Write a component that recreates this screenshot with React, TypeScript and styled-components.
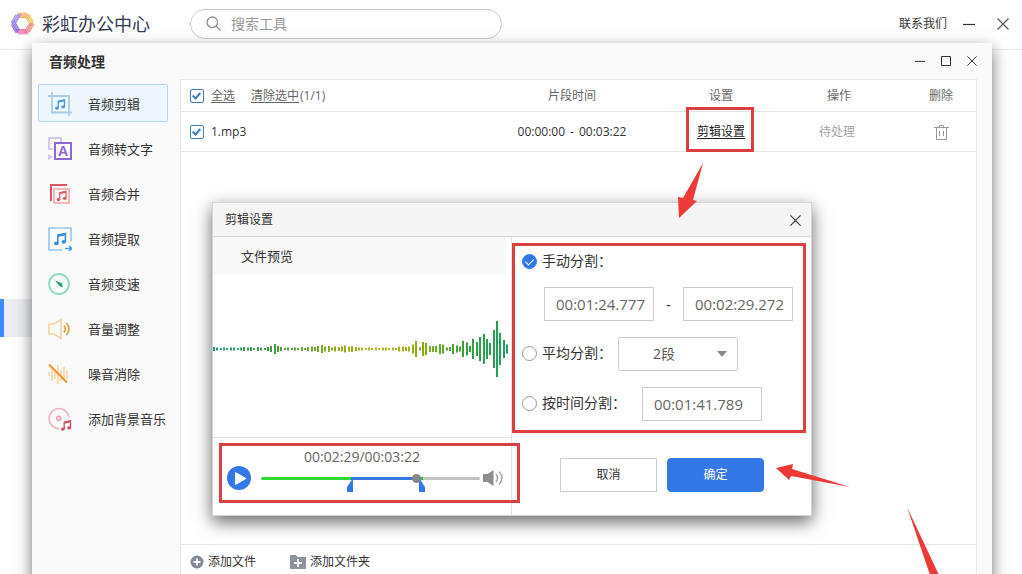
import React from 'react';
import styled, { createGlobalStyle, css } from 'styled-components';

const RED = '#d9403f';
const BLUE = '#3478e8';

const GlobalStyle = createGlobalStyle`
  *, *::before, *::after { box-sizing: border-box; }
  body {
    margin: 0;
    background: #fff;
    color: #333;
    font-family: "Open Sans", "Noto Sans CJK SC", sans-serif;
    font-size: 12px;
    line-height: 18px;
  }
  button, input, select { font: inherit; color: inherit; margin: 0; }
  button { background: none; border: 0; padding: 0; cursor: pointer; }
  svg { display: block; flex: none; }
`;

/* ---------- host application ---------- */

const Page = styled.div`
  position: relative;
  min-height: 100vh;
  overflow: hidden;
`;

const Header = styled.header`
  display: flex;
  align-items: center;
  height: 50px;
  padding: 0 13px 2px 11px;
  border-bottom: 1px solid #e8e8e8;
`;

const Brand = styled.h1`
  display: flex;
  align-items: center;
  gap: 8px;
  margin: 0 40px 0 0;
  color: #33394f;
  font-size: 18px;
  font-weight: 400;
  line-height: 24px;
`;

const Search = styled.label`
  display: flex;
  align-items: center;
  gap: 10px;
  flex: 0 1 312px;
  height: 30px;
  padding: 0 15px;
  border: 1px solid #c9cacd;
  border-radius: 15px;
  input {
    flex: 1;
    min-width: 0;
    padding: 0;
    border: 0;
    outline: 0;
    background: none;
    font-size: 14px;
  }
  input::placeholder { color: #9a9a9a; opacity: 1; }
`;

const HeaderActions = styled.div`
  display: flex;
  align-items: center;
  margin-left: auto;
`;

const ContactLink = styled.a`
  margin-right: 16px;
  color: #333;
  text-decoration: none;
`;

const WindowButtons = styled.div<{ $gap: number }>`
  display: flex;
  align-items: center;
  gap: ${(p) => p.$gap}px;
`;

const Rail = styled.nav`
  width: 60px;
  padding-top: 249px;
`;

const RailItem = styled.div`
  height: 38px;
  border-left: 4px solid #3d8bfa;
  background: #ecedf0;
`;

/* ---------- audio window ---------- */

const Window = styled.section`
  position: absolute;
  top: 43px;
  right: 30px;
  bottom: -21px;
  left: 32px;
  display: flex;
  flex-direction: column;
  background: #fafafa;
  box-shadow: 0 6px 15px rgba(0, 0, 0, 0.55);
`;

const TitleBar = styled.div`
  display: flex;
  align-items: center;
  justify-content: space-between;
  height: 36px;
  padding: 0 15px 0 17px;
  h2 { margin: 0; padding-top: 2px; font-size: 14px; line-height: 20px; font-weight: 700; }
`;

const WindowBody = styled.div`
  flex: 1;
  display: flex;
  padding: 0 15px 15px 0;
`;

const Sidebar = styled.nav`
  display: flex;
  flex-direction: column;
  gap: 7px;
  width: 148px;
  padding: 5px 12px 0 6px;
`;

const SideItem = styled.button<{ $active?: boolean }>`
  display: flex;
  align-items: center;
  gap: 16px;
  height: 38px;
  padding: 1px 0 0 9px;
  border: 1px solid transparent;
  border-radius: 2px;
  font-size: 13px;
  white-space: nowrap;
  ${(p) => p.$active && css`
    border-color: #b5d6f3;
    background: #eef6fe;
  `}
`;

const Panel = styled.main`
  flex: 1;
  display: flex;
  flex-direction: column;
  border: 1px solid #e5e8ea;
  background: #fff;
`;

const FileTable = styled.table`
  width: 100%;
  table-layout: fixed;
  border-collapse: separate;
  border-spacing: 0;
  th, td {
    position: relative;
    height: 40px;
    padding: 0;
    border-bottom: 1px solid #e6e6e6;
    text-align: center;
    font-weight: 400;
  }
  th { height: 32px; color: #666; }
  th:first-child, td:first-child { padding-left: 9px; text-align: left; }
`;

const CheckRow = styled.div`
  display: flex;
  align-items: center;
  gap: 7px;
  label { cursor: pointer; }
`;

const TextButton = styled.button<{ $dark?: boolean }>`
  color: ${(p) => (p.$dark ? '#222' : '#666')};
  text-decoration: underline;
  text-underline-offset: 2px;
`;

const ClearGroup = styled.span`
  display: flex;
  gap: 1px;
  margin-left: 9px;
`;

const TimeRange = styled.span`
  display: flex;
  justify-content: center;
  gap: 5px;
`;

const Checkbox = styled.input`
  appearance: none;
  position: relative;
  width: 14px;
  height: 14px;
  border: 1px solid #3f7fc0;
  border-radius: 2px;
  background: #fff;
  &:checked::after {
    content: '';
    position: absolute;
    top: 1px;
    left: 3px;
    width: 5px;
    height: 8px;
    border: solid #3f7fc0;
    border-width: 0 2px 2px 0;
    transform: rotate(42deg);
  }
`;

const Muted = styled.span`
  padding-right: 4px;
  color: #a3a3a3;
`;

const IconButton = styled.button`
  display: inline-flex;
  vertical-align: middle;
`;

const PanelFooter = styled.footer`
  display: flex;
  align-items: center;
  gap: 34px;
  height: 35px;
  margin-top: auto;
  padding-left: 9px;
  border-top: 1px solid #e6e6e6;
`;

const FooterButton = styled.button`
  display: flex;
  align-items: center;
  gap: 4px;
`;

/* ---------- dialog ---------- */

const Dialog = styled.section`
  position: absolute;
  top: 159px;
  right: 0;
  left: 0;
  width: 600px;
  margin: 0 auto;
  border: 1px solid #d4d4d4;
  background: #fff;
  box-shadow: 0 6px 16px rgba(0, 0, 0, 0.6);
`;

const DialogTitle = styled.div`
  display: flex;
  align-items: center;
  justify-content: space-between;
  height: 34px;
  padding: 1px 10px 0 12px;
  border-bottom: 1px solid #d6d6d6;
  background: #f5f5f5;
  h3 { margin: 0; font-size: 12px; font-weight: 400; }
`;

const DialogBody = styled.div`
  display: grid;
  grid-template-columns: 299px 1fr;
`;

const Preview = styled.div`
  border-right: 1px solid #e3e3e3;
`;

const PreviewTitle = styled.h4`
  margin: 0 5px 0 0;
  padding-left: 28px;
  background: #f8f8f8;
  font-size: 13px;
  font-weight: 400;
  line-height: 38px;
`;

const WaveArea = styled.div`
  height: 163px;
  border-bottom: 1px solid #e3e3e3;
`;

const Player = styled.div`
  position: relative;
  height: 77px;
  padding-top: 10px;
  color: #666;
  font-size: 14px;
  text-align: center;
`;

const PlayerRow = styled.div`
  display: flex;
  align-items: center;
  height: 24px;
  padding: 0 6px 0 14px;
`;

const Track = styled.div`
  position: relative;
  flex: 1;
  margin: 0 3px 0 10px;
  height: 24px;
`;

const Seek = styled.input`
  appearance: none;
  display: block;
  width: 100%;
  height: 24px;
  background: none;
  &::-webkit-slider-runnable-track {
    height: 3px;
    border-radius: 2px;
    background: linear-gradient(
      to right,
      #30dc32 0 41%,
      ${BLUE} 41% 72%,
      #38b848 72% 74%,
      #c2c2c2 74%
    );
  }
  &::-webkit-slider-thumb {
    appearance: none;
    width: 9px;
    height: 9px;
    margin-top: -3px;
    border-radius: 50%;
    background: #888;
  }
`;

const TrimHandle = styled.svg<{ $at: number; $end?: boolean }>`
  position: absolute;
  top: 12px;
  left: ${(p) => p.$at}%;
  transform: ${(p) => (p.$end ? 'scaleX(-1)' : 'translateX(-100%)')};
`;

const Options = styled.form`
  display: flex;
  flex-direction: column;
`;

const Fields = styled.fieldset`
  position: relative;
  display: flex;
  flex-direction: column;
  gap: 16px;
  min-width: 0;
  margin: 0;
  padding: 14px 0 0 10px;
  border: 0;
`;

const OptionRow = styled.div<{ $gap?: number }>`
  display: flex;
  align-items: center;
  gap: ${(p) => p.$gap ?? 0}px;
`;

const RadioLabel = styled.label`
  display: flex;
  align-items: center;
  gap: 5px;
  font-size: 14px;
  line-height: 20px;
  &:not(:only-child) { padding-bottom: 2px; }
`;

const Radio = styled.input`
  appearance: none;
  position: relative;
  width: 15px;
  height: 15px;
  border: 1px solid #999;
  border-radius: 50%;
  background: #fff;
  &:checked { border-color: ${BLUE}; background: ${BLUE}; }
  &:checked::after {
    content: '';
    position: absolute;
    top: 2px;
    left: 4px;
    width: 5px;
    height: 8px;
    border: solid #fff;
    border-width: 0 1px 1px 0;
    transform: rotate(45deg);
  }
`;

const RangeRow = styled.div`
  display: flex;
  align-items: center;
  padding-left: 22px;
  > span { width: 29px; text-align: center; font-size: 15px; }
`;

const TimeInput = styled.input<{ $w: number }>`
  width: ${(p) => p.$w}px;
  height: 34px;
  padding: 0 0 0 11px;
  border: 1px solid #ccc;
  background: #fff;
  color: #666;
  font-size: 15px;
`;

const SelectBox = styled.div`
  position: relative;
  &::after {
    content: '';
    position: absolute;
    top: 14px;
    right: 11px;
    border: 5px solid transparent;
    border-top: 6px solid #888;
    border-bottom: 0;
    pointer-events: none;
  }
  select {
    appearance: none;
    display: block;
    width: 120px;
    height: 34px;
    padding: 0 30px 0 34px;
    border: 1px solid #ccc;
    border-radius: 2px;
    background: #fff;
    color: #555;
    font-size: 14px;
  }
`;

const Actions = styled.div`
  display: flex;
  gap: 10px;
  margin-top: 37px;
  padding-left: 48px;
`;

const ActionButton = styled.button<{ $primary?: boolean }>`
  width: 97px;
  height: 34px;
  border: 1px solid #c9ced6;
  background: #fff;
  ${(p) => p.$primary && css`
    border-color: ${BLUE};
    border-radius: 4px;
    background: ${BLUE};
    color: #fff;
  `}
`;

/* ---------- tutorial marks ---------- */

const Mark = styled.div<{ $inset: string }>`
  position: absolute;
  inset: ${(p) => p.$inset};
  border: 3px solid ${RED};
  pointer-events: none;
`;

const Arrow = styled.svg<{ $inset: string }>`
  position: absolute;
  inset: ${(p) => p.$inset};
  fill: #ee3a37;
  pointer-events: none;
`;

/* ---------- icons ---------- */

const HEX_COLORS = ['#f7a86c', '#fbc45c', '#f58a80', '#ee72b0', '#8a6be0', '#a08cf0'];

const LogoIcon = () => (
  <svg width="23" height="23" viewBox="-11.5 -11.5 23 23" fill="none" strokeWidth="1.1">
    {HEX_COLORS.map((color, i) => (
      <g key={color} stroke={color} transform={`rotate(${i * 60})`}>
        <path d="M-5.4 -10.2H4.6M-5.4 -8.8H5.6M-5 -7.4H6.4M-3.8 -6H7.2" />
      </g>
    ))}
  </svg>
);

const SearchIcon = () => (
  <svg width="15" height="15" viewBox="0 0 15 15" fill="none" stroke="#8b8f9c" strokeWidth="1.3">
    <circle cx="6.3" cy="6.3" r="5.3" />
    <path d="M10.2 10.2L14.4 14.4" />
  </svg>
);

const MinimizeIcon = ({ size = 12 }) => (
  <svg width={size} height={size} viewBox="0 0 12 12" stroke="#333" strokeWidth="1.2">
    <path d="M0 6.5H12" />
  </svg>
);

const MaximizeIcon = () => (
  <svg width="10" height="10" viewBox="0 0 10 10" fill="none" stroke="#333">
    <path d="M.5 .5H9.5V9.5H.5Z" />
  </svg>
);

const CloseIcon = ({ size = 12, color = '#333' }) => (
  <svg width={size} height={size} viewBox="0 0 12 12" stroke={color} strokeWidth="1.2">
    <path d="M.5 .5L11.5 11.5M11.5 .5L.5 11.5" />
  </svg>
);

const TrashIcon = () => (
  <svg width="15" height="16" viewBox="0 0 15 16" fill="none" stroke="#999">
    <path d="M0 3.5H15M5.500 3V1.500H9.500V3M2.500 3.500V15.500H12.500V3.500M5.500 7V12M9.500 7V12" />
  </svg>
);

const Note = ({ color, x = 0, y = 0 }: { color: string; x?: number; y?: number }) => (
  <g transform={`translate(${x} ${y})`}>
    <path d="M3.2 9V2.2L9.5 .8V7.5" fill="none" stroke={color} strokeWidth="1.3" />
    <path d="M3.2 2.8L9.5 1.4" stroke={color} strokeWidth="1.8" />
    <ellipse cx="1.9" cy="9.1" rx="1.9" ry="1.6" fill={color} />
    <ellipse cx="8.2" cy="7.8" rx="1.9" ry="1.6" fill={color} />
  </g>
);

const SideIcon = ({ children }: { children: React.ReactNode }) => (
  <svg width="24" height="24" viewBox="0 0 24 24" fill="none">{children}</svg>
);

const TrimIcon = () => (
  <SideIcon>
    <path d="M0 4H21V20M4 0V20.5H24M21 20V24" stroke="#a9cbe6" strokeWidth="1.8" />
    <Note color="#4c9ad6" x={7} y={7} />
  </SideIcon>
);

const ToTextIcon = () => (
  <SideIcon>
    <path d="M5 12H1V1H13V5" stroke="#cbb8ee" strokeWidth="1.5" />
    <path d="M0 17L5 20L0 23Z" fill="#d3c3f1" />
    <rect x="7" y="6" width="16" height="16" stroke="#9068d4" strokeWidth="2" />
    <text x="15" y="19" textAnchor="middle" fill="#9068d4" fontSize="14" fontWeight="700" fontFamily="Liberation Sans">A</text>
  </SideIcon>
);

const MergeIcon = () => (
  <SideIcon>
    <path d="M3 19V3H19" stroke="#dd5560" strokeWidth="2" />
    <rect x="6" y="7" width="15" height="14" stroke="#f2a7a6" strokeWidth="1.6" />
    <Note color="#df5c62" x={8.5} y={8.5} />
  </SideIcon>
);

const ExtractIcon = () => (
  <SideIcon>
    <path d="M23 14V1H1V23H14" stroke="#9cc5f2" strokeWidth="1.6" />
    <g transform="translate(6 5.500) scale(1.2)"><Note color="#3b8ce0" /></g>
    <path d="M17 21.5H23.5M21 19L23.8 21.5L21 24" stroke="#4d9ae4" strokeWidth="1.6" />
  </SideIcon>
);

const SpeedIcon = () => (
  <SideIcon>
    <circle cx="11" cy="12" r="10" stroke="#8edcc2" strokeWidth="1.8" />
    <path d="M7 8.500L13.500 11Q15 12.500 14.500 15.500L11.500 14Z" fill="#20a676" />
  </SideIcon>
);

const VolumeIcon = () => (
  <SideIcon>
    <path d="M1 7H6L13 2.5V21.5L6 17H1Z" stroke="#f7d3a3" strokeWidth="1.6" />
    <path d="M16 8.5Q18.5 12 16 15.5M18.5 6Q23.5 12 18.5 18" stroke="#e6a04a" strokeWidth="1.8" />
  </SideIcon>
);

const DenoiseIcon = () => (
  <SideIcon>
    <path d="M1 10V14M4 6V19M7 8V17M10 3V22M13 8V19M16 5V16M19 9V17" stroke="#fad6a0" strokeWidth="1.6" />
    <path d="M1 2.5L19 20.5" stroke="#ee9430" strokeWidth="2" />
  </SideIcon>
);

const MusicIcon = () => (
  <SideIcon>
    <path d="M11 21.5A10 10 0 1 1 21 10.5" stroke="#f2b3c1" strokeWidth="1.6" />
    <circle cx="10.8" cy="11.3" r="2" stroke="#efa3b4" strokeWidth="1.8" />
    <Note color="#d9475f" x={13} y={13} />
  </SideIcon>
);

const AddFileIcon = () => (
  <svg width="14" height="14" viewBox="0 0 14 14">
    <circle cx="7" cy="7" r="6.5" fill="#858b96" />
    <path d="M7 3.5V10.5M3.5 7H10.5" stroke="#fff" strokeWidth="1.8" />
  </svg>
);

const AddFolderIcon = () => (
  <svg width="16" height="14" viewBox="0 0 16 14">
    <path d="M0 0H6L7.5 2H16V14H0Z" fill="#8d93a0" />
    <path d="M8 4V12M4 8H12" stroke="#fff" strokeWidth="1.8" />
  </svg>
);

const PlayIcon = () => (
  <svg width="24" height="24" viewBox="0 0 24 24">
    <circle cx="12" cy="12" r="12" fill={BLUE} />
    <path d="M8.5 6.5V18.5L19 12.5Z" fill="#fff" stroke="#fff" strokeLinejoin="round" />
  </svg>
);

const SpeakerIcon = () => (
  <svg width="22" height="18" viewBox="0 0 22 18" fill="none">
    <path d="M0 5H4.5L10.5 1V17L4.5 13H0Z" fill="#8e8e8e" />
    <path d="M13 5Q16 9 13 13M16 2.5Q22 9 16 15.5" stroke="#a5a5a5" strokeWidth="1.5" />
  </svg>
);

/* ---------- waveform ---------- */

const LEVELS = [
  4, 3, 2, 3, 2, 3, 3, 2, 3, 4, 3, 4, 2, 4, 3, 2, 4, 6, 10, 6,
  4, 2, 3, 2, 3, 2, 4, 2, 4, 5, 4, 6, 8, 5, 6, 3, 5, 4, 5, 7,
  5, 6, 4, 3, 3, 2, 3, 2, 3, 2, 3, 3, 2, 3, 2, 5, 5, 4, 5, 9,
  16, 3, 14, 12, 6, 6, 6, 10, 9, 3, 4, 10, 7, 5, 16, 13, 6, 20, 14, 24,
  30, 20, 12, 38, 56, 32, 18, 9,
];

const Waveform = () => (
  <svg width="298" height="148" viewBox="0 0 298 148">
    <defs>
      <linearGradient id="wave" gradientUnits="userSpaceOnUse" x1="0" y1="0" x2="298" y2="0">
        <stop offset="0" stopColor="#2a9a80" />
        <stop offset=".2" stopColor="#3f9e42" />
        <stop offset=".45" stopColor="#9aae1c" />
        <stop offset=".58" stopColor="#bdb428" />
        <stop offset=".7" stopColor="#85b012" />
        <stop offset=".85" stopColor="#36a03c" />
        <stop offset="1" stopColor="#1a9f62" />
      </linearGradient>
    </defs>
    {LEVELS.map((h, i) => (
      <rect key={i} x={Math.round(i * 3.37)} y={74 - h / 2} width="2" height={h} fill="url(#wave)" />
    ))}
  </svg>
);

const MENU = [
  { label: '音频剪辑', Icon: TrimIcon },
  { label: '音频转文字', Icon: ToTextIcon },
  { label: '音频合并', Icon: MergeIcon },
  { label: '音频提取', Icon: ExtractIcon },
  { label: '音频变速', Icon: SpeedIcon },
  { label: '音量调整', Icon: VolumeIcon },
  { label: '噪音消除', Icon: DenoiseIcon },
  { label: '添加背景音乐', Icon: MusicIcon },
];

const SplitDialog = () => (
  <Dialog role="dialog" aria-labelledby="split-title">
    <DialogTitle>
      <h3 id="split-title">剪辑设置</h3>
      <IconButton aria-label="关闭"><CloseIcon size={11} /></IconButton>
    </DialogTitle>
    <DialogBody>
      <Preview>
        <PreviewTitle>文件预览</PreviewTitle>
        <WaveArea><Waveform /></WaveArea>
        <Player>
          <div>00:02:29/00:03:22</div>
          <PlayerRow>
            <IconButton aria-label="播放"><PlayIcon /></IconButton>
            <Track>
              <Seek type="range" min={0} max={202} defaultValue={145} aria-label="播放进度" />
              <TrimHandle $at={42} width="6" height="14" viewBox="0 0 6 14">
                <path d="M6 0V14H0V9Z" fill={BLUE} />
              </TrimHandle>
              <TrimHandle $at={72} $end width="6" height="14" viewBox="0 0 6 14">
                <path d="M6 0V14H0V9Z" fill={BLUE} />
              </TrimHandle>
            </Track>
            <IconButton aria-label="音量"><SpeakerIcon /></IconButton>
          </PlayerRow>
          <Mark $inset="5px -9px 12px 6px" />
        </Player>
      </Preview>
      <Options onSubmit={(e) => e.preventDefault()}>
        <Fields>
          <OptionRow>
            <RadioLabel><Radio type="radio" name="mode" defaultChecked />手动分割：</RadioLabel>
          </OptionRow>
          <RangeRow>
            <TimeInput $w={110} defaultValue="00:01:24.777" aria-label="开始时间" />
            <span>-</span>
            <TimeInput $w={110} defaultValue="00:02:29.272" aria-label="结束时间" />
          </RangeRow>
          <OptionRow $gap={6}>
            <RadioLabel><Radio type="radio" name="mode" />平均分割：</RadioLabel>
            <SelectBox>
              <select aria-label="段数" defaultValue="2">
                <option value="2">2段</option>
              </select>
            </SelectBox>
          </OptionRow>
          <OptionRow $gap={16}>
            <RadioLabel><Radio type="radio" name="mode" />按时间分割：</RadioLabel>
            <TimeInput $w={120} defaultValue="00:01:41.789" aria-label="分割时间" />
          </OptionRow>
          <Mark $inset="6px 5px -12px 0" />
        </Fields>
        <Actions>
          <ActionButton type="button">取消</ActionButton>
          <ActionButton type="submit" $primary>确定</ActionButton>
        </Actions>
      </Options>
    </DialogBody>
    <Arrow $inset="-41px auto auto 465px" width="26" height="56" viewBox="0 0 26 56">
      <path d="M25 1L15 38L19 39L1 56L0 35L5 36Z" />
    </Arrow>
    <Arrow $inset="260px auto auto 562px" width="76" height="26" viewBox="0 0 76 26">
      <path d="M1 5L18 1L17 6L75 24L16 13L14 17Z" />
    </Arrow>
  </Dialog>
);

export default function App() {
  return (
    <Page>
      <GlobalStyle />
      <Header>
        <Brand><LogoIcon />彩虹办公中心</Brand>
        <Search>
          <SearchIcon />
          <input type="search" placeholder="搜索工具" aria-label="搜索工具" />
        </Search>
        <HeaderActions>
          <ContactLink href="#contact">联系我们</ContactLink>
          <WindowButtons $gap={22}>
            <IconButton aria-label="最小化"><MinimizeIcon /></IconButton>
            <IconButton aria-label="关闭"><CloseIcon color="#555" /></IconButton>
          </WindowButtons>
        </HeaderActions>
      </Header>
      <Rail><RailItem /></Rail>

      <Window>
        <TitleBar>
          <h2>音频处理</h2>
          <WindowButtons $gap={16}>
            <IconButton aria-label="最小化"><MinimizeIcon size={10} /></IconButton>
            <IconButton aria-label="最大化"><MaximizeIcon /></IconButton>
            <IconButton aria-label="关闭"><CloseIcon size={10} /></IconButton>
          </WindowButtons>
        </TitleBar>
        <WindowBody>
          <Sidebar>
            {MENU.map(({ label, Icon }, i) => (
              <SideItem key={label} $active={i === 0}><Icon />{label}</SideItem>
            ))}
          </Sidebar>
          <Panel>
            <FileTable>
              <colgroup>
                <col />
                <col width="196" />
                <col width="102" />
                <col width="134" />
                <col width="70" />
              </colgroup>
              <thead>
                <tr>
                  <th>
                    <CheckRow>
                      <Checkbox type="checkbox" defaultChecked aria-label="全选" />
                      <TextButton>全选</TextButton>
                      <ClearGroup><TextButton>清除选中</TextButton>(1/1)</ClearGroup>
                    </CheckRow>
                  </th>
                  <th>片段时间</th>
                  <th>设置</th>
                  <th>操作</th>
                  <th>删除</th>
                </tr>
              </thead>
              <tbody>
                <tr>
                  <td>
                    <CheckRow>
                      <Checkbox type="checkbox" id="file-1" defaultChecked />
                      <label htmlFor="file-1">1.mp3</label>
                    </CheckRow>
                  </td>
                  <td>
                    <TimeRange>
                      <span>00:00:00</span><span>-</span><span>00:03:22</span>
                    </TimeRange>
                  </td>
                  <td>
                    <TextButton $dark>剪辑设置</TextButton>
                    <Mark $inset="-5px 18px -1px 16px" />
                  </td>
                  <td><Muted>待处理</Muted></td>
                  <td><IconButton aria-label="删除"><TrashIcon /></IconButton></td>
                </tr>
              </tbody>
            </FileTable>
            <PanelFooter>
              <FooterButton><AddFileIcon />添加文件</FooterButton>
              <FooterButton><AddFolderIcon />添加文件夹</FooterButton>
            </PanelFooter>
          </Panel>
        </WindowBody>
        <SplitDialog />
        <Arrow $inset="464px 50px auto auto" width="36" height="90" viewBox="0 0 36 90">
          <path d="M1 0L33 68L35 90L24 68Z" />
        </Arrow>
      </Window>
    </Page>
  );
}
